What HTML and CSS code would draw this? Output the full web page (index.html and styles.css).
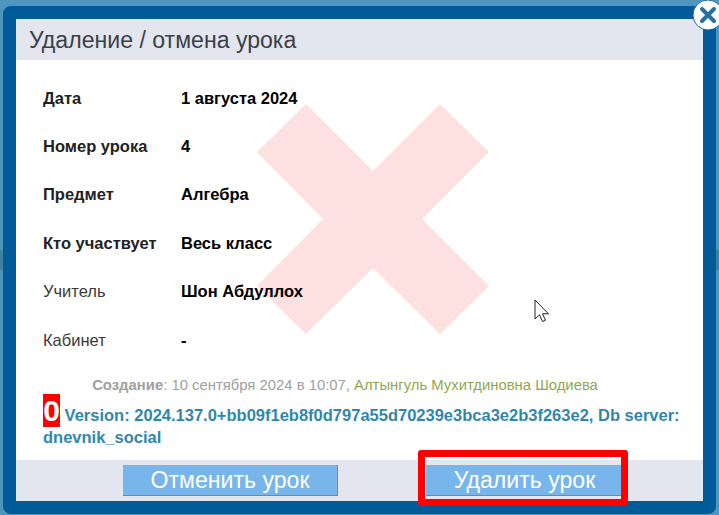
FILE: index.html
```html
<!DOCTYPE html>
<html lang="ru">
<head>
<meta charset="utf-8">
<title>Удаление / отмена урока</title>
<link rel="stylesheet" href="styles.css">
</head>
<body>
<div class="modal">
  <a class="close" aria-label="Закрыть">
    <svg width="32" height="32" viewBox="0 0 32 32"><circle cx="16" cy="16" r="15" fill="#fff" stroke="#1d6a9e" stroke-width="1"/><path d="M10 10L22 22M22 10L10 22" stroke="#27709f" stroke-width="4" stroke-linecap="round" fill="none"/></svg>
  </a>
  <header class="head">Удаление / отмена урока</header>
  <main class="body">
    <svg class="cross" width="232" height="231" viewBox="0 0 232 231"><polygon fill="#fde0e0" points="49,0 116,67 183,0 232,48 165,115 232,182 183,230 116,164 49,230 0,182 66,115 0,48"/></svg>
    <svg class="cursor" width="16" height="24" viewBox="0 0 16 24"><path d="M1 1V20L5.500 15.800L8.500 22.500L11.500 21.200L8.500 14.800H14.500Z" fill="#fff" stroke="#222" stroke-width="1"/></svg>
    <div class="rows">
      <div class="row"><span class="label strong">Дата</span><span class="value">1 августа 2024</span></div>
      <div class="row"><span class="label strong">Номер урока</span><span class="value">4</span></div>
      <div class="row"><span class="label strong">Предмет</span><span class="value">Алгебра</span></div>
      <div class="row"><span class="label strong">Кто участвует</span><span class="value">Весь класс</span></div>
      <div class="row"><span class="label">Учитель</span><span class="value">Шон Абдуллох</span></div>
      <div class="row"><span class="label">Кабинет</span><span class="value">-</span></div>
    </div>
    <p class="created"><b>Создание</b>: 10 сентября 2024 в 10:07, <span class="author">Алтынгуль Мухитдиновна Шодиева</span></p>
    <p class="version"><span class="zero">0</span> Version: 2024.137.0+bb09f1eb8f0d797a55d70239e3bca3e2b3f263e2, Db server: dnevnik_social</p>
  </main>
  <footer class="foot">
    <button class="btn btn-cancel">Отменить урок</button>
    <div class="marked">
      <button class="btn btn-delete">Удалить урок</button>
      <span class="mark"></span>
    </div>
  </footer>
</div>
</body>
</html>
```
FILE: styles.css
```css
* { box-sizing: border-box; }
html, body { margin: 0; height: 100%; }
body {
  width: 719px;
  height: 515px;
  overflow: hidden;
  font-family: "Liberation Sans", Arial, sans-serif;
  background: linear-gradient(to bottom, #4f96bf 0, #4f96bf 250px, #3f7f9f 250px, #3f7f9f 270px, #4f96bf 270px);
  padding: 6px 3px 0;
}
.modal {
  position: relative;
  width: 713px;
  height: 508px;
  border: 13px solid #005b98;
  border-radius: 8px;
  background: #fff;
  display: flex;
  flex-direction: column;
}
.close {
  position: absolute;
  right: -21px;
  top: -20px;
  width: 32px;
  height: 32px;
}
.close svg { display: block; }
.head {
  height: 41px;
  flex: none;
  background: #e3e6ee;
  color: #3b3f46;
  font-size: 23.100px;
  line-height: 43px;
  padding-left: 13px;
}
.body {
  position: relative;
  flex: 1;
  padding: 14px 20px 0 27px;
}
.cross { position: absolute; left: 241px; top: 44px; }
.cursor { position: absolute; left: 518px; top: 239px; }
.rows { position: relative; }
.row {
  display: flex;
  height: 48.400px;
  align-items: center;
  font-size: 16.500px;
  color: #000;
}
.label { width: 138px; color: #3a3a3a; }
.label.strong { font-weight: 700; color: #222; }
.value { font-weight: 700; }
.created {
  position: relative;
  margin: 12.400px 0 0;
  text-align: center;
  font-size: 14.850px;
  line-height: 17px;
  color: #a0a0a0;
  padding-right: 36px;
}
.author { color: #8fa84f; }
.version {
  position: relative;
  margin: 0;
  font-size: 16.500px;
  font-weight: 700;
  line-height: 21px;
  color: #2f87ae;
}
.zero {
  display: inline-block;
  background: #f00;
  color: #fff;
  font-size: 30px;
  line-height: 33px;
  height: 33px;
  width: 17px;
  text-align: center;
  vertical-align: baseline;
}
.foot {
  height: 41px;
  flex: none;
  background: #e3e6ee;
  display: flex;
  align-items: flex-start;
  gap: 88px;
  padding: 5px 0 0 107px;
}
.btn {
  display: block;
  height: 31px;
  margin: 0;
  padding: 0 0 1px;
  background: #77b5ea;
  border: 0;
  border-right: 1px solid #5b8db8;
  border-bottom: 1px solid #5b8db8;
  color: #fff;
  font-family: inherit;
  font-size: 23.100px;
  line-height: 30px;
}
.btn-cancel { width: 215px; }
.btn-delete { width: 197px; border-right: 0; }
.marked { position: relative; }
.mark {
  position: absolute;
  left: -8px;
  top: -15px;
  width: 210px;
  height: 56px;
  border: 7px solid #f00;
  border-radius: 3px;
}
```
